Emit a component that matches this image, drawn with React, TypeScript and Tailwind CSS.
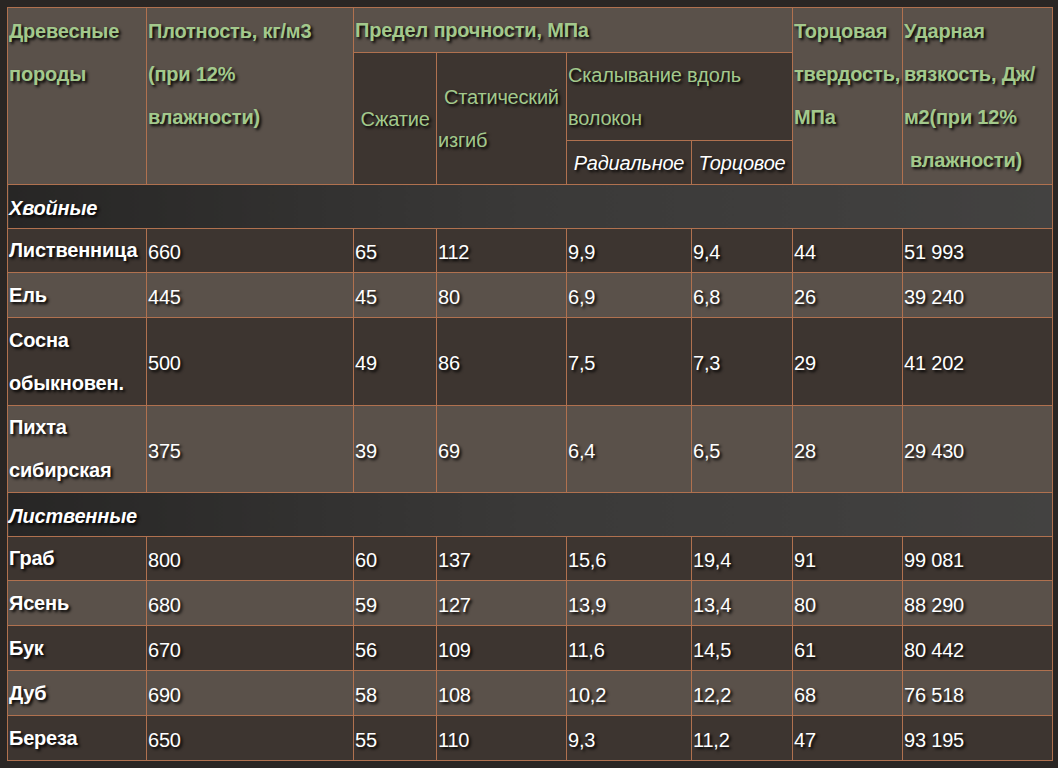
import React from "react";

const B = "border border-[#b0714f]";
const sh = { textShadow: "2px 2px 3px #000" };
const dark = "bg-[#3d3530]";
const light = "bg-[#5a514a]";

const rows1 = [
  ["Лиственница", "660", "65", "112", "9,9", "9,4", "44", "51 993", 44],
  ["Ель", "445", "45", "80", "6,9", "6,8", "26", "39 240", 45],
  ["Сосна обыкновен.", "500", "49", "86", "7,5", "7,3", "29", "41 202", 88],
  ["Пихта сибирская", "375", "39", "69", "6,4", "6,5", "28", "29 430", 87],
];
const rows2 = [
  ["Граб", "800", "60", "137", "15,6", "19,4", "91", "99 081", 44],
  ["Ясень", "680", "59", "127", "13,9", "13,4", "80", "88 290", 45],
  ["Бук", "670", "56", "109", "11,6", "14,5", "61", "80 442", 45],
  ["Дуб", "690", "58", "108", "10,2", "12,2", "68", "76 518", 45],
  ["Береза", "650", "55", "110", "9,3", "11,2", "47", "93 195", 45],
];

function Row({ r, i }: { r: any[]; i: number }) {
  const bg = i % 2 === 0 ? dark : light;
  return (
    <tr className={bg} style={{ height: r[8] }}>
      <td className={`${B} font-bold leading-[43px] px-[1px] whitespace-nowrap`}>
        {r[0].split(" ").map((w: string, k: number) => (
          <div key={k}>{w}</div>
        ))}
      </td>
      {r.slice(1, 8).map((c: string, k: number) => (
        <td key={k} className={`${B} px-[1px] pt-[3px]`}>{c}</td>
      ))}
    </tr>
  );
}

function Section({ t }: { t: string }) {
  return (
    <tr className="h-[44px]">
      <td colSpan={8} className={`${B} font-bold italic px-[1px] pt-[3px] bg-gradient-to-r from-[#272625] via-[#3a3938] to-[#434241]`}>{t}</td>
    </tr>
  );
}

export default function App() {
  return (
    <div className="w-[1058px] h-[768px] bg-[#2a2624] p-[7px] text-white text-[20px] tracking-[-0.2px]" style={{ fontFamily: '"Liberation Sans", Arial, sans-serif', ...sh }}>
      <table className="table-fixed border-collapse w-[1045px]">
        <colgroup>
          <col style={{ width: 139 }} />
          <col style={{ width: 207 }} />
          <col style={{ width: 83 }} />
          <col style={{ width: 130 }} />
          <col style={{ width: 125 }} />
          <col style={{ width: 101 }} />
          <col style={{ width: 110 }} />
          <col style={{ width: 150 }} />
        </colgroup>
        <tbody>
          <tr className={`${light} h-[45px]`}>
            <td rowSpan={3} className={`${B} align-top font-bold text-[#a3c98c] leading-[43px] px-[1px] pt-[2px]`}>Древесные<br />породы</td>
            <td rowSpan={3} className={`${B} align-top font-bold text-[#a3c98c] leading-[43px] px-[1px] pt-[2px]`}>Плотность, кг/м3<br />(при 12%<br />влажности)</td>
            <td colSpan={4} className={`${B} font-bold text-[#a3c98c] px-[1px]`}>Предел прочности, МПа</td>
            <td rowSpan={3} className={`${B} align-top font-bold text-[#a3c98c] leading-[43px] px-[1px] pt-[2px] whitespace-nowrap`}>Торцовая<br />твердость,<br />МПа</td>
            <td rowSpan={3} className={`${B} align-top font-bold text-[#a3c98c] leading-[43px] px-[1px] pt-[2px] whitespace-nowrap`}>Ударная<br />вязкость, Дж/<br />м2(при 12%<br /><span className="pl-[6px]">влажности)</span></td>
          </tr>
          <tr className="h-[88px]">
            <td rowSpan={2} className={`${B} ${dark} text-[#a3c98c] text-center`}>Сжатие</td>
            <td rowSpan={2} className={`${B} ${dark} text-[#a3c98c] leading-[43px] px-[1px] whitespace-nowrap`}><div className="pl-[6px]">Статический</div>изгиб</td>
            <td colSpan={2} className={`${B} ${dark} text-[#a3c98c] leading-[43px] px-[1px]`}>Скалывание вдоль<br />волокон</td>
          </tr>
          <tr className="h-[44px]">
            <td className={`${B} ${dark} italic text-center whitespace-nowrap`}>Радиальное</td>
            <td className={`${B} ${dark} italic text-center whitespace-nowrap`}>Торцовое</td>
          </tr>
          <Section t="Хвойные" />
          {rows1.map((r, i) => <Row key={i} r={r} i={i} />)}
          <Section t="Лиственные" />
          {rows2.map((r, i) => <Row key={i} r={r} i={i} />)}
        </tbody>
      </table>
    </div>
  );
}
